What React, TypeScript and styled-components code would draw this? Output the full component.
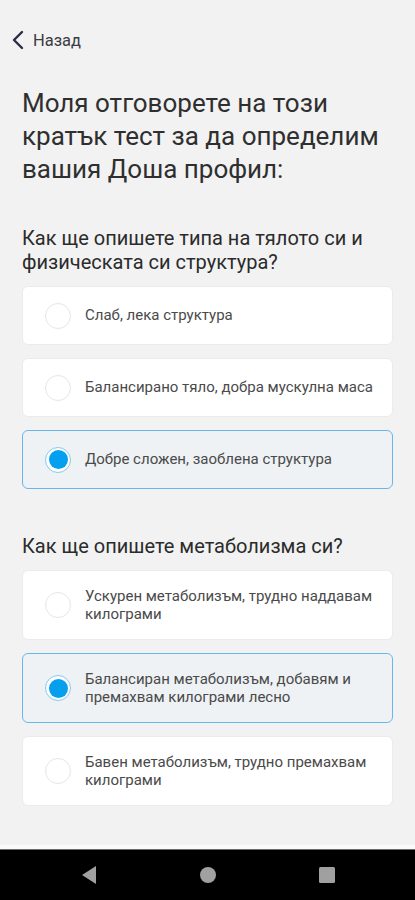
import { FC } from 'react';
import styled, { createGlobalStyle } from 'styled-components';

const GlobalStyle = createGlobalStyle`
  html, body {
    margin: 0;
    padding: 0;
    background: #f2f2f2;
  }
  body {
    font-family: Roboto, 'Noto Sans', 'Liberation Sans', sans-serif;
    -webkit-font-smoothing: antialiased;
  }
  * {
    box-sizing: border-box;
  }
`;

const Screen = styled.div`
  width: 415px;
  min-height: 900px;
  display: flex;
  flex-direction: column;
  background: #f2f2f2;
`;

const Content = styled.main`
  flex: 1;
  padding: 28px 22px 0;
`;

const BackButton = styled.button`
  display: flex;
  align-items: center;
  gap: 8px;
  height: 24px;
  margin-left: -22px;
  padding: 0 0 0 10px;
  border: none;
  background: transparent;
  font-family: inherit;
  font-size: 16.5px;
  color: #3c3c46;
  cursor: pointer;

  svg {
    width: 15px;
    height: 20px;
  }
`;

const Title = styled.h1`
  margin: 35px 0 0;
  font-size: 26px;
  line-height: 33px;
  font-weight: 400;
  color: #2f2f2f;
`;

const Section = styled.section<{ $top: number }>`
  margin-top: ${(p) => p.$top}px;
`;

const Question = styled.h2`
  margin: 0 0 12px;
  font-size: 20px;
  line-height: 24px;
  font-weight: 400;
  color: #2b2b2b;
`;

const Options = styled.div`
  display: flex;
  flex-direction: column;
  gap: 13px;
`;

const Option = styled.label<{ $selected?: boolean }>`
  display: flex;
  align-items: center;
  gap: 14px;
  padding: 15.5px 16px 15.5px 22px;
  border-radius: 6px;
  border: 1px solid ${(p) => (p.$selected ? '#6ab6ea' : '#ebebeb')};
  background: ${(p) => (p.$selected ? '#eef2f5' : '#ffffff')};
  cursor: pointer;
`;

const Radio = styled.span<{ $checked?: boolean }>`
  flex: 0 0 26px;
  width: 26px;
  height: 26px;
  border-radius: 50%;
  border: 1.5px solid ${(p) => (p.$checked ? '#84caf3' : '#e6e6e6')};
  background: #ffffff;
  display: flex;
  align-items: center;
  justify-content: center;

  &::after {
    content: '';
    display: ${(p) => (p.$checked ? 'block' : 'none')};
    width: 19px;
    height: 19px;
    border-radius: 50%;
    background: #04a0ef;
  }
`;

const OptionText = styled.span`
  font-size: 15px;
  line-height: 18.5px;
  color: #4a4a4a;
`;

const NavBar = styled.nav`
  height: 55px;
  border-top: 4px solid #fafafa;
  background: #000;
  display: flex;
  align-items: center;
  justify-content: center;
  gap: 101px;
  box-shadow: inset 0 1px 0 #6a6a6a;
`;

const NavIcon = styled.svg`
  width: 18px;
  height: 18px;
  fill: #a0a0a0;
`;

type Choice = { text: string; selected?: boolean };

const questions: { title: string; top: number; choices: Choice[] }[] = [
  {
    title: 'Как ще опишете типа на тялото си и физическата си структура?',
    top: 40,
    choices: [
      { text: 'Слаб, лека структура' },
      { text: 'Балансирано тяло, добра мускулна маса' },
      { text: 'Добре сложен, заоблена структура', selected: true },
    ],
  },
  {
    title: 'Как ще опишете метаболизма си?',
    top: 45,
    choices: [
      { text: 'Ускурен метаболизъм, трудно наддавам килограми' },
      { text: 'Балансиран метаболизъм, добавям и премахвам килограми лесно', selected: true },
      { text: 'Бавен метаболизъм, трудно премахвам килограми' },
    ],
  },
];

const App: FC = () => {
  return (
    <>
      <GlobalStyle />
      <Screen>
        <Content>
          <BackButton>
            <svg viewBox="0 0 15 20" fill="none">
              <path d="M12 2 L4 10 L12 18" stroke="#2a2a4a" strokeWidth="2.4" strokeLinecap="round" strokeLinejoin="round" />
            </svg>
            Назад
          </BackButton>
          <Title>Моля отговорете на този кратък тест за да определим вашия Доша профил:</Title>
          {questions.map((q) => (
            <Section key={q.title} $top={q.top}>
              <Question>{q.title}</Question>
              <Options>
                {q.choices.map((c) => (
                  <Option key={c.text} $selected={c.selected}>
                    <Radio $checked={c.selected} />
                    <OptionText>{c.text}</OptionText>
                  </Option>
                ))}
              </Options>
            </Section>
          ))}
        </Content>
        <NavBar>
          <NavIcon viewBox="0 0 18 18">
            <path d="M16 0 L16 18 L2 9 Z" />
          </NavIcon>
          <NavIcon viewBox="0 0 18 18">
            <circle cx="9" cy="9" r="8" />
          </NavIcon>
          <NavIcon viewBox="0 0 18 18">
            <rect x="1" y="1" width="16" height="16" rx="1.5" />
          </NavIcon>
        </NavBar>
      </Screen>
    </>
  );
};

export default App;
